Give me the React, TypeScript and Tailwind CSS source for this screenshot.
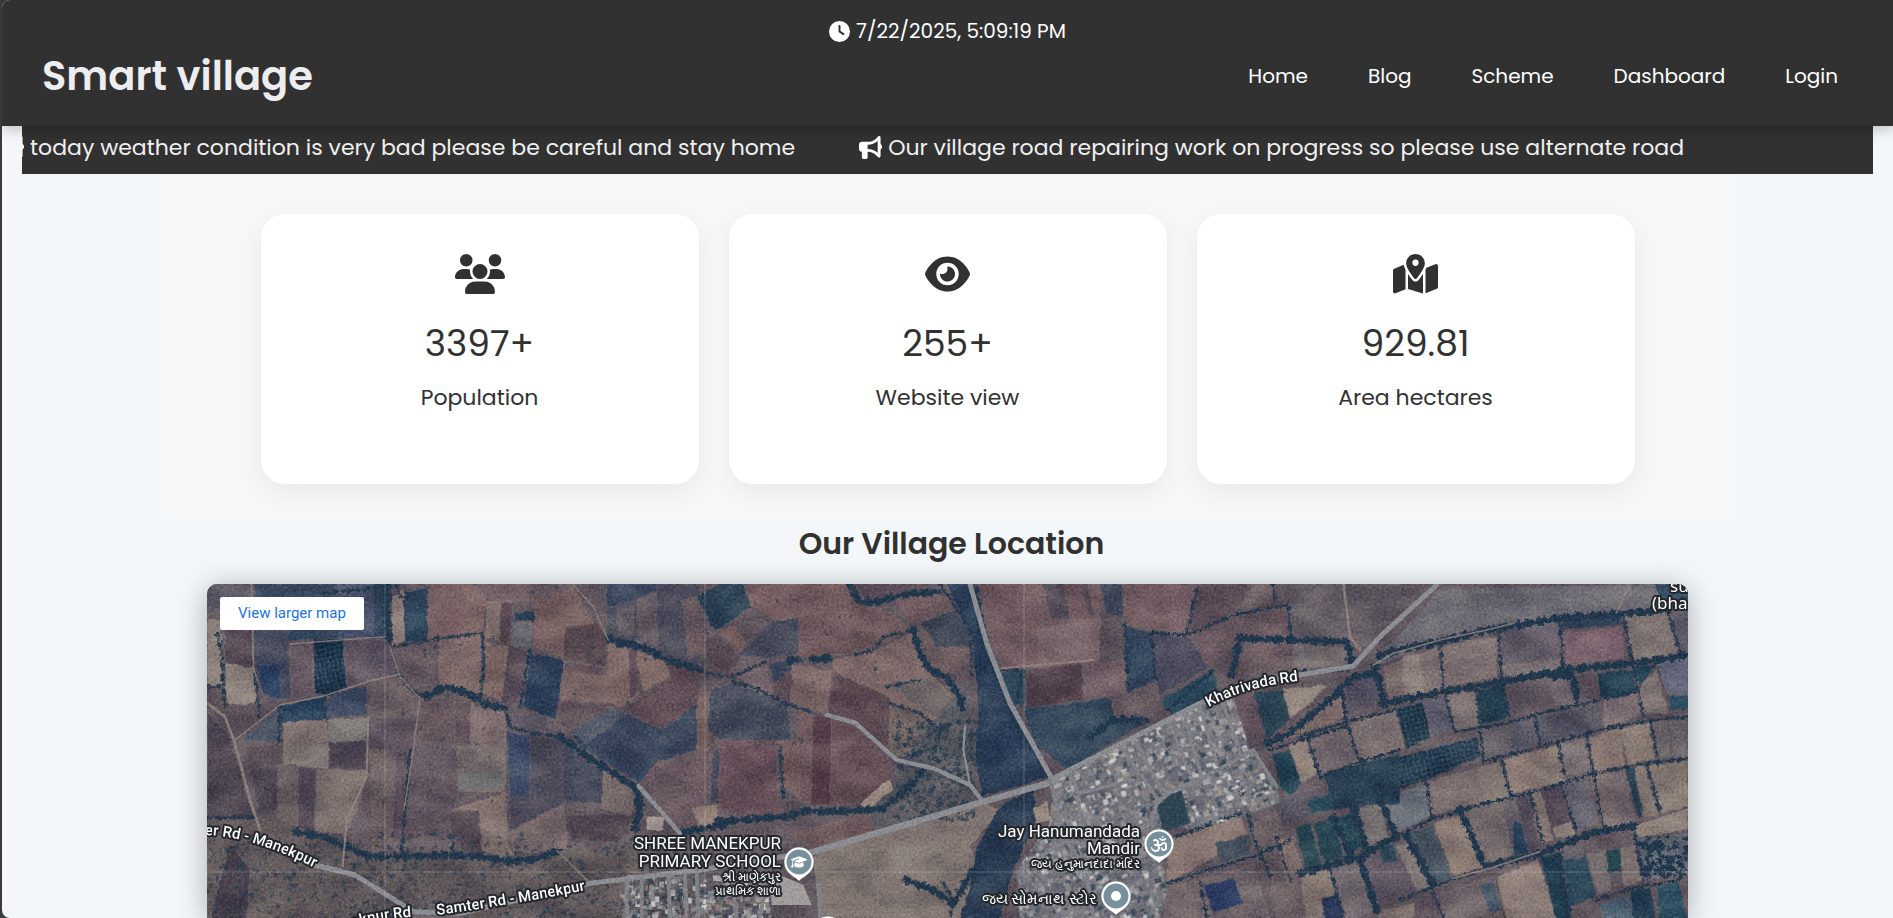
import type { ReactNode } from "react";
import {
  FaBullhorn,
  FaClock,
  FaEye,
  FaGraduationCap,
  FaMapLocationDot,
  FaOm,
  FaUsers,
} from "react-icons/fa6";

type Shape = [points: string, fill: string];

const NAV = ["Home", "Blog", "Scheme", "Dashboard", "Login"];

const NEWS = [
  "today weather condition is very bad please be careful and stay home",
  "Our village road repairing work on progress so please use alternate road",
];

const STATS: { icon: ReactNode; value: string; label: string }[] = [
  { icon: <FaUsers className="h-10 w-[50px]" />, value: "3397+", label: "Population" },
  { icon: <FaEye className="h-10 w-[45px]" />, value: "255+", label: "Website view" },
  { icon: <FaMapLocationDot className="h-10 w-[45px]" />, value: "929.81", label: "Area hectares" },
];

/* Aerial view: four tiles side by side, each in its own units (3 per pixel). */

const WEST: Shape[] = [
  ["22,42 150,42 150,140 22,130", "#56525f"],
  ["165,42 560,42 560,200 160,215", "#34465c"],
  ["415,42 520,42 520,200 415,205", "#46506a"],
  ["160,180 265,180 272,385 240,390 165,290", "#454a5c"],
  ["75,180 155,180 160,290 75,280", "#4f434f"],
  ["22,150 60,150 70,350 22,350", "#857a76"],
  ["75,280 160,295 170,400 80,405", "#8b7f7a"],
  ["170,285 240,285 240,390 190,370", "#2b4160"],
  ["270,222 335,215 345,375 275,388", "#62555f"],
  ["340,208 430,208 440,355 380,378 345,370", "#1f3850"],
  ["430,208 555,205 590,315 440,350", "#5f5460"],
  ["245,405 370,380 380,445 245,460", "#263f58"],
  ["385,375 500,345 500,435 385,445", "#3f4c62"],
  ["160,480 240,410 240,515 120,510", "#47505f"],
  ["250,460 380,450 385,515 250,520", "#80736f"],
  ["385,450 500,445 500,512 385,515", "#76726f"],
  ["250,520 385,518 385,598 250,580", "#7d7371"],
  ["388,517 498,514 498,598 388,596", "#524854"],
  ["135,530 245,522 245,585 145,600", "#5a4e55"],
  ["150,600 235,590 232,720 175,725", "#4f4751"],
  ["238,588 295,588 293,780 232,775", "#6a5f60"],
  ["296,590 347,597 342,785 293,780", "#544b55"],
  ["350,600 500,600 480,700 440,790 345,785", "#786c69"],
  ["520,330 600,315 655,385 650,440 505,440", "#6a5d61"],
  ["505,445 650,445 635,540 500,535", "#5e535d"],
  ["655,390 763,380 765,520 640,520", "#65565c"],
  ["765,385 812,390 812,520 765,520", "#5c4e55"],
  ["508,540 640,545 610,815 520,850", "#6c5e60"],
  ["590,545 635,545 610,815 575,815", "#584d58"],
  ["640,525 765,525 775,690 745,720 615,705", "#62575f"],
  ["615,705 745,705 755,812 610,815", "#5f545d"],
  ["770,525 918,520 918,665 775,665", "#786c6c"],
  ["778,600 915,600 915,660 778,660", "#70716f"],
  ["750,720 918,668 922,800 940,860 850,870 838,722", "#80706c"],
  ["745,725 835,722 848,870 760,850", "#544952"],
  ["580,240 680,222 710,345 620,350", "#66585f"],
  ["710,215 840,190 850,370 720,350", "#7a6765"],
  ["685,42 860,42 845,185 685,210", "#775f61"],
  ["820,42 1120,42 1000,95 860,95", "#6a5a60"],
  ["575,80 610,60 615,210 580,225", "#8b7c76"],
  ["612,65 680,55 683,210 615,215", "#2c4259"],
  ["860,95 940,90 930,220 855,205", "#806e6a"],
  ["905,95 940,97 928,218 897,218", "#5b4b53"],
  ["940,155 1000,160 990,235 932,225", "#6c6a72"],
  ["945,125 1005,125 1005,155 945,150", "#2a4156"],
  ["1005,90 1120,50 1200,200 1220,208 1090,260 1000,235", "#755f5f"],
  ["1095,170 1195,160 1225,210 1215,290 1090,260", "#57484f"],
  ["858,215 925,230 910,400 850,370", "#7c6864"],
  ["925,230 985,240 955,400 905,400", "#564b56"],
  ["990,250 1090,268 1068,450 970,410", "#2c3d56"],
  ["1090,270 1215,290 1220,400 1080,390", "#7a6664"],
  ["1095,272 1210,292 1210,318 1092,302", "#67555c"],
  ["1080,395 1230,405 1110,480 1070,460", "#5c4d56"],
  ["1225,215 1290,240 1320,375 1265,415 1215,390", "#7c6865"],
  ["1310,245 1390,265 1410,315 1330,365", "#7f6a65"],
  ["1285,240 1308,240 1320,360 1290,390", "#5a4a54"],
  ["1220,42 1500,42 1500,300 1400,270 1260,225 1220,190", "#4d4c5b"],
  ["1220,42 1370,42 1370,60 1250,110 1220,110", "#39455a"],
  ["1250,115 1300,110 1300,200 1255,195", "#5d5860"],
  ["1310,90 1370,65 1375,250 1310,225", "#665b62"],
  ["1405,275 1500,310 1500,395 1385,480 1275,415 1410,320", "#5d4b53"],
  ["1110,480 1245,415 1385,480 1490,400 1495,540 1370,575 1320,640 1140,530", "#3a465a"],
  ["1110,480 1245,415 1285,430 1160,520", "#525966"],
  ["930,430 1010,435 1080,490 960,480", "#5a5560"],
  ["920,485 1090,510 1210,590 1205,700 1090,700 990,785 930,780", "#4f4c59"],
  ["920,485 990,500 990,680 930,680", "#3b4963"],
  ["1090,530 1210,600 1205,700 1090,690", "#3f4353"],
  ["812,390 915,415 918,520 812,520", "#79696a"],
  ["925,785 1090,700 1105,835 940,850", "#78696a"],
  ["1105,735 1295,735 1290,790 1250,815 1110,815", "#51454f"],
  ["1210,600 1310,670 1295,735 1205,720", "#776a69"],
  ["1320,640 1370,575 1500,550 1500,790 1440,780", "#62535a"],
  ["22,430 90,500 170,770 22,740", "#4a424e"],
  ["22,750 230,745 430,830 600,860 860,860 1060,840 1280,820 1500,830 1500,1050 22,1050", "#605759"],
  ["90,820 150,900 140,1050 30,1050", "#453e4a"],
];

const CENTRE: Shape[] = [
  ["430,42 740,42 775,110 600,140 525,150 455,105", "#735b5d"],
  ["245,90 290,80 345,185 315,240 265,270", "#66575d"],
  ["290,80 360,42 430,42 455,110 345,185", "#2b4152"],
  ["315,210 350,190 425,260 380,320 320,260", "#56474f"],
  ["360,185 405,165 440,225 425,255", "#775f5c"],
  ["410,255 525,150 595,145 595,250 500,265", "#454858"],
  ["600,140 720,118 755,250 600,260", "#6c5559"],
  ["720,118 830,110 880,130 930,180 830,230 755,250", "#6f5a5c"],
  ["770,42 1030,42 1020,65 800,100", "#5b4c57"],
  ["885,90 1030,60 1060,120 940,160", "#6c585c"],
  ["950,170 1060,120 1110,180 1120,310 1020,310 980,260", "#67585b"],
  ["960,160 1060,120 1110,180 1110,230 1010,230", "#3f4553"],
  ["410,320 500,280 515,375 480,355", "#716067"],
  ["510,280 580,270 575,300 520,340", "#3a4557"],
  ["520,340 580,295 570,400 520,375", "#5a4a53"],
  ["580,285 695,300 680,435 570,400", "#7a6664"],
  ["700,270 830,240 930,190 980,300 1080,400 1080,470 1000,450 870,400 700,300", "#7b6766"],
  ["870,350 980,320 1070,400 1080,470 1000,440", "#6c6465"],
  ["700,305 870,380 865,525 840,545 765,455 685,430", "#5b4951"],
  ["330,360 400,340 560,400 575,510 360,510 325,480", "#434858"],
  ["295,370 325,365 325,540 290,545", "#725d5c"],
  ["362,510 530,510 535,735 440,735 355,720", "#654f57"],
  ["535,510 600,510 600,690 550,640", "#725b5c"],
  ["600,420 640,435 632,700 600,695", "#6c565b"],
  ["640,440 695,440 690,705 632,705", "#573f49"],
  ["695,450 770,465 870,580 880,640 780,700 692,705", "#654f55"],
  ["870,400 960,430 1020,480 990,550 870,560", "#6d615f"],
  ["1130,42 1500,42 1500,280 1210,300 1165,180", "#6f595f"],
  ["1310,180 1500,140 1500,270 1320,285", "#79666a"],
  ["1270,420 1500,390 1500,560 1310,540", "#34495a"],
  ["640,860 820,780 1150,700 1200,720 1110,830 1200,1050 660,1050", "#7f746f"],
  ["570,790 820,730 830,785 640,845", "#6b575a"],
  ["890,590 1120,650 1130,700 830,780 800,720 880,650", "#5c5a60"],
  ["1000,450 1100,330 1125,550 1130,670 900,580", "#57585f"],
  ["780,700 870,625 880,660 800,720", "#a08f85"],
  ["160,580 290,545 350,545 350,700 270,760 165,700", "#66565d"],
  ["340,545 360,530 355,700 330,700", "#46495a"],
  ["275,710 350,705 355,760 300,780", "#8a7870"],
  ["140,740 190,740 190,780 140,780", "#a59992"],
  ["1040,42 1105,42 1160,230 1230,400 1350,620 1145,680 1125,550 1135,400 1115,200", "#2a3d55"],
  ["1200,710 1300,650 1310,750 1240,900 1200,1050 1080,1050 1120,900 1130,830", "#28394f"],
  ["1300,720 1340,690 1350,750 1310,760", "#92867d"],
];

const VILLAGE: Shape[] = [
  ["300,42 365,42 370,140 320,130", "#3e4757"],
  ["125,42 190,42 210,145 155,148", "#514b57"],
  ["240,42 260,42 285,135 265,135", "#564952"],
  ["370,42 590,42 560,190 375,170", "#70595f"],
  ["590,50 760,42 700,130 565,190", "#594b55"],
  ["760,42 820,42 815,95 720,125", "#6a5d61"],
  ["375,165 455,190 465,330 385,370", "#33455b"],
  ["570,195 860,105 870,200 720,210 620,290", "#66565d"],
  ["455,195 570,200 625,295 470,380", "#4a4a5b"],
  ["245,280 375,270 385,375 255,390", "#715f66"],
  ["80,300 245,282 250,390 80,415", "#54454e"],
  ["330,395 470,335 475,390 340,455", "#6b5d61"],
  ["0,310 75,300 75,410 40,410", "#31495a"],
  ["75,415 330,385 345,450 450,450 200,600 130,540", "#34485a"],
  ["480,390 640,300 660,370 520,440", "#2a4558"],
  ["870,42 1200,42 1200,110 1090,240 1050,210 870,200", "#625b62"],
  ["720,210 880,215 880,290 700,320", "#66585e"],
  ["880,220 1050,235 1050,280 885,300", "#726a6b"],
  ["700,370 765,365 800,500 740,530", "#61515a"],
  ["760,365 850,360 870,450 800,510", "#2b4553"],
  ["850,355 980,345 930,400 870,445", "#958880"],
  ["810,530 1020,370 1035,440", "#7b6a68"],
  ["1040,330 1140,310 1150,390 1040,440", "#55505e"],
  ["1045,470 1185,420 1200,540 1080,580", "#786c6c"],
  ["920,510 1040,470 1075,575 960,610", "#71666a"],
  ["865,525 915,505 955,610 905,640", "#8d7e77"],
  ["815,550 870,540 905,640 870,680 840,650", "#234251"],
  ["970,610 1200,550 1200,700 1000,720", "#2a4052"],
  ["830,690 930,660 1000,720 820,770", "#56525f"],
  ["925,690 990,670 1000,720 930,730", "#2a4858"],
  ["500,810 720,740 750,800 500,940", "#84736e"],
  ["650,820 750,790 750,850 655,885", "#3f4b58"],
  ["500,950 600,930 600,1050 490,1050", "#6f6265"],
  ["600,930 760,880 810,1050 610,1050", "#6d6165"],
  ["610,945 700,925 730,1000 640,1030", "#2b3b60"],
  ["760,760 830,720 850,790 760,830", "#6e6265"],
  ["830,810 880,800 910,910 860,930", "#776765"],
  ["885,770 930,760 960,890 920,900", "#27454f"],
  ["945,755 1000,745 1030,850 960,860", "#25434f"],
  ["1005,750 1050,730 1085,830 1040,850", "#254350"],
  ["1060,720 1130,700 1160,800 1100,830", "#77706f"],
  ["810,950 890,920 920,1050 830,1050", "#6f6163"],
  ["900,930 990,910 1030,1050 920,1050", "#857870"],
  ["965,985 1015,975 1030,1050 975,1050", "#2c3858"],
];

const VILLAGE_AREA =
  "160,620 600,400 700,385 750,540 830,650 840,700 720,740 580,780 480,760 500,960 480,1050 60,1050 50,900 150,760";

const POND = "545,660 570,760 490,785 470,710 505,675";

const EAST: Shape[] = [
  ["200,300 420,60 1060,42 1100,120 420,210", "#6a6870"],
  ["425,225 590,200 590,320 430,355", "#7b6e6e"],
  ["250,290 420,230 430,355 265,390", "#7a6c6c"],
  ["305,260 360,250 375,375 315,375", "#8c7f79"],
  ["595,180 780,165 780,260 600,280", "#615a66"],
  ["600,285 780,265 780,310 600,330", "#736a6d"],
  ["785,190 968,170 970,265 790,280", "#775f6a"],
  ["785,145 965,135 968,165 785,180", "#35465a"],
  ["975,140 1100,125 1135,250 1000,285", "#7f7371"],
  ["1060,42 1164,42 1164,110 1100,120", "#2b4459"],
  ["1115,130 1164,120 1164,245 1140,250", "#5b5866"],
  ["890,310 1000,300 1005,370 905,390", "#24404f"],
  ["1010,360 1070,300 1105,430 1030,430", "#7f7472"],
  ["1000,290 1070,285 1020,350", "#233f53"],
  ["1070,275 1164,260 1164,380 1100,370", "#66687a"],
  ["1105,380 1164,375 1164,420 1110,420", "#2d4b5f"],
  ["620,345 750,335 760,410 630,440", "#605760"],
  ["755,335 820,320 825,400 765,405", "#696067"],
  ["830,315 885,310 890,390 835,395", "#61565f"],
  ["530,360 605,345 625,440 545,465", "#24404f"],
  ["440,375 525,360 540,465 465,480", "#7b7070"],
  ["370,395 435,385 460,480 395,495", "#5e5d6b"],
  ["285,415 370,395 390,500 320,540", "#294453"],
  ["80,620 530,500 540,560 380,630 230,680 100,720", "#294053"],
  ["145,465 285,420 315,530 180,570", "#7a6d6b"],
  ["205,480 245,470 265,545 225,550", "#5c5762"],
  ["200,445 240,435 245,460 205,467", "#a19186"],
  ["705,440 900,400 910,470 720,525", "#4f4e5b"],
  ["635,465 700,450 715,525 635,545", "#5b5a66"],
  ["540,480 630,465 630,545 550,570", "#666066"],
  ["905,390 1010,370 1025,435 915,470", "#78696d"],
  ["865,505 960,475 975,585 885,605", "#85766f"],
  ["960,480 1050,455 1065,565 985,580", "#84776f"],
  ["1055,450 1100,450 1115,560 1075,565", "#736a6c"],
  ["1110,450 1155,445 1155,560 1120,560", "#6b646a"],
  ["780,520 860,505 870,600 795,620", "#786e70"],
  ["610,570 775,525 795,635 635,670", "#867870"],
  ["530,590 605,575 625,680 550,700", "#817570"],
  ["382,635 530,595 548,700 395,735", "#7b6d6d"],
  ["245,680 378,645 390,740 285,790", "#6a7079"],
  ["170,720 240,695 262,800 200,830", "#746f70"],
  ["105,745 160,725 190,830 150,850", "#234250"],
  ["40,760 95,745 130,860 75,880", "#25434f"],
  ["0,775 30,770 65,880 10,890", "#2c4553"],
  ["400,760 480,735 550,890 460,915", "#8a7b73"],
  ["320,790 400,765 455,925 400,940", "#46535f"],
  ["490,720 600,690 640,850 550,885", "#73696a"],
  ["605,695 640,685 685,850 640,860", "#5d5660"],
  ["640,750 665,760 685,850 640,860", "#2b4458"],
  ["645,680 685,670 720,830 690,850", "#4e4855"],
  ["690,665 720,655 760,810 725,820", "#827470"],
  ["720,655 780,645 825,785 760,800", "#5a4e59"],
  ["760,770 815,755 825,795 765,800", "#8b7f79"],
  ["785,640 860,620 895,760 830,780", "#62606b"],
  ["870,620 930,605 960,770 910,775", "#766869"],
  ["935,605 975,600 1005,750 960,765", "#6f6469"],
  ["1000,590 1035,585 1080,735 1035,740", "#7d716c"],
  ["975,595 1000,590 1030,740 1015,745", "#26404f"],
  ["1040,590 1164,570 1164,710 1085,730", "#857970"],
  ["1000,770 1164,720 1164,780 1010,800", "#8b7f77"],
  ["1015,805 1164,790 1164,915 1030,930", "#646870"],
  ["180,880 300,820 390,940 230,1010", "#5e5561"],
  ["240,835 280,820 290,870 250,880", "#2a4556"],
  ["290,830 330,815 390,950 350,965", "#7d7371"],
  ["5,915 90,900 130,1050 20,1050", "#857870"],
  ["60,985 115,975 130,1050 75,1050", "#2c3858"],
  ["95,895 175,870 225,1020 140,1050", "#6c6468"],
  ["590,920 715,870 770,1050 620,1050", "#8a7c75"],
  ["720,860 775,850 805,1050 770,1050", "#223f50"],
  ["785,845 850,835 890,980 810,1010", "#2a4556"],
  ["790,835 850,825 850,860 790,870", "#665f66"],
  ["860,850 915,840 935,960 895,975", "#746b6c"],
  ["918,840 960,835 965,905 925,910", "#25434f"],
  ["960,835 1005,825 1030,930 970,950", "#807470"],
  ["420,970 580,915 610,1050 430,1050", "#6f6468"],
  ["540,945 580,930 605,1020 570,1030", "#485666"],
  ["230,1025 340,1000 350,1050 235,1050", "#7d716d"],
  ["345,1000 415,980 430,1050 340,1050", "#594f59"],
  ["900,1000 985,975 1000,1050 910,1050", "#4d6070"],
  ["990,960 1050,950 1070,1050 1000,1050", "#243d4f"],
  ["1070,950 1140,935 1160,1050 1080,1050", "#2a4c5c"],
];

const TREES_WEST = [
  "52,190 65,260 75,410",
  "165,310 178,440",
  "240,410 238,515",
  "22,350 60,350",
  "370,70 560,50 565,215",
  "590,45 600,80",
  "580,230 710,205 845,190",
  "848,195 850,300 840,390",
  "595,310 640,365 680,380",
  "915,415 930,470 1000,490 1080,500",
  "990,240 960,410",
  "372,380 380,450",
  "630,540 615,720 605,860",
  "755,800 760,860",
  "22,745 160,740",
];

const THICK_WEST = [
  "680,378 740,350 800,368 860,405 915,415",
  "1080,500 1140,545 1310,655",
  "1225,205 1280,225 1340,235 1400,270 1500,300",
  "1310,660 1320,720 1305,780",
  "560,42 565,215",
  "290,785 370,800 440,830 510,860 600,860 760,855 850,860 920,875 1000,868 1080,840",
];

const TREES_CENTRE = [
  "50,225 90,215 150,240 200,268 260,280 320,310 390,322 500,275",
  "770,253 820,240 850,200 940,180",
  "1020,42 1060,100 1110,180 1115,310",
  "860,350 960,330",
  "870,400 960,430 1020,480 1010,530 920,560",
  "540,530 545,600 550,680",
  "400,335 480,360 560,400 640,430",
  "1155,240 1225,410 1340,610",
  "1210,300 1270,300 1250,400",
  "1030,940 1060,990 1050,1040",
];

const THICK_CENTRE = [
  "355,755 450,748 560,740 620,722 700,725 850,715 930,650 970,600",
  "255,785 370,765",
  "940,180 960,250 990,300 1040,320 1080,380 1090,420",
  "750,42 775,95 830,95 930,70 1020,65",
  "110,655 120,720 105,760",
  "570,270 600,268",
  "640,268 690,264",
  "920,930 1000,960 1060,1000 1120,900",
  "1125,60 1150,220",
];

const TREES_VILLAGE = [
  "455,190 465,325",
  "375,165 385,370",
  "560,190 590,60",
  "455,188 560,195 700,135 865,105 872,205",
  "820,42 825,100",
  "500,420 640,300",
  "880,305 1050,300",
  "810,540 920,505 1040,470",
  "1025,370 1040,460",
  "1130,310 1150,400 1190,400",
  "500,940 620,900 760,860 870,810",
  "720,640 760,800 810,920",
  "500,810 720,730",
  "830,800 870,930",
  "600,940 620,1040",
];

const THICK_VILLAGE = [
  "720,200 695,320",
  "720,205 1040,215 1055,280",
  "800,520 870,490 1000,380 1060,320 1130,310",
  "270,500 340,450 440,450",
];

const TREES_EAST = [
  "0,500 140,455 285,420",
  "60,620 180,575 300,540",
  "465,485 620,460 720,430 900,390 1010,365",
  "550,575 720,530 915,475 1060,450 1164,440",
  "290,800 400,745 560,700 740,655 880,610 1040,580 1164,565",
  "300,990 450,930 580,890",
  "595,180 605,330 630,450",
  "780,150 790,305",
  "970,130 1000,290 1030,440",
  "420,220 430,360 465,485",
  "125,350 140,460 180,575",
  "25,510 60,620",
  "530,360 550,575",
  "705,440 720,530",
  "775,525 795,620",
  "860,500 880,610 910,775",
  "605,575 635,690",
  "380,640 395,740",
  "820,320 830,400",
  "780,640 830,785",
  "690,670 730,820",
  "1040,580 1080,730",
  "1050,450 1075,570",
  "1000,770 1030,940",
  "90,900 130,1044",
  "1105,125 1140,250",
  "400,970 430,1044",
  "890,990 990,955 1140,930",
];

const THICK_EAST = [
  "240,255 290,240 420,215 560,180 780,145 1100,120",
  "250,400 430,365 610,335 790,300 1000,280 1164,255",
  "0,910 180,860 290,800",
  "560,890 720,850 870,790 1010,765",
  "225,290 255,400",
  "480,720 555,890",
  "240,690 290,800",
  "165,720 200,840",
  "100,745 150,850",
  "775,860 805,1044",
  "180,870 230,1020",
  "320,800 400,945",
  "760,320 820,315 830,385",
];

function random(seed: number) {
  let s = seed;
  return () => {
    s = (s * 16807) % 2147483647;
    return s / 2147483647;
  };
}

const ROOFS = ["#b9b7b8", "#9a989b", "#8a888d", "#dcdad8", "#8c8078", "#465362", "#2f4252", "#a39d9a", "#6a6a72", "#7f7f86"];

function buildRoofs(seed: number, count: number, x: number, y: number, w: number, h: number) {
  const next = random(seed);
  return Array.from({ length: count }, (_, i) => ({
    id: i,
    x: x + next() * w,
    y: y + next() * h,
    w: 5 + next() * 14,
    h: 5 + next() * 14,
    fill: ROOFS[Math.floor(next() * ROOFS.length)],
    turn: -24 + next() * 8,
  }));
}

const MAIN_ROOFS = buildRoofs(77, 2400, 50, 385, 800, 665);
const SCHOOL_ROOFS = buildRoofs(31, 400, 60, 915, 440, 130);

function buildDots(seed: number, count: number, x: number, y: number, w: number, h: number) {
  const next = random(seed);
  return Array.from({ length: count }, (_, i) => ({
    id: i,
    x: x + next() * w,
    y: y + next() * h,
    r: 2 + next() * 5,
  }));
}

const SCRUB = buildDots(5, 900, 22, 790, 1500, 255);
const GROVE = buildDots(9, 110, 1020, 800, 140, 120);
const BANK = buildDots(12, 300, 880, 450, 250, 300);
const FIELD_TREES = buildDots(21, 260, 500, 50, 1600, 650);

function Fields({ shapes }: { shapes: Shape[] }) {
  return (
    <g stroke="#8f8280" strokeOpacity="0.3" strokeWidth="2">
      {shapes.map(([points, fill]) => (
        <polygon key={points} points={points} fill={fill} />
      ))}
    </g>
  );
}

function Trees({ lines, thick }: { lines: string[]; thick: string[] }) {
  return (
    <g fill="none" stroke="#20364b" strokeLinecap="round" strokeLinejoin="round">
      {lines.map((points) => (
        <polyline key={points} points={points} strokeWidth="5" />
      ))}
      {lines.map((points) => (
        <polyline key={points} points={points} strokeWidth="11" strokeDasharray="3 27 10 38 1 19" />
      ))}
      {thick.map((points) => (
        <polyline key={points} points={points} strokeWidth="14" />
      ))}
      {thick.map((points) => (
        <polyline key={points} points={points} strokeWidth="25" strokeDasharray="4 30 12 40 1 26" />
      ))}
    </g>
  );
}

function Pin({ x, y, children }: { x: number; y: number; children: ReactNode }) {
  return (
    <g transform={`translate(${x} ${y})`}>
      <path d="M0 19C-3 16-9 13.500-12 9A15 15 0 1 1 12 9C9 13.500 3 16 0 19Z" fill="#fff" stroke="#3b4048" strokeOpacity="0.4" />
      <circle r="12.500" fill="#78909c" />
      <g color="#fff">{children}</g>
    </g>
  );
}

function AerialMap() {
  return (
    <svg
      viewBox="0 0 1481 334"
      preserveAspectRatio="xMidYMin slice"
      className="block h-full w-full"
      role="img"
      aria-label="Satellite map of Manekpur"
    >
      <defs>
        <filter id="rough" x="0" y="0" width="100%" height="100%" colorInterpolationFilters="sRGB">
          <feTurbulence type="fractalNoise" baseFrequency="0.12" numOctaves="3" seed="4" result="n" />
          <feDisplacementMap in="SourceGraphic" in2="n" scale="4" xChannelSelector="R" yChannelSelector="G" />
        </filter>
        <filter id="leafy" x="0" y="0" width="100%" height="100%" colorInterpolationFilters="sRGB">
          <feTurbulence type="fractalNoise" baseFrequency="0.3" numOctaves="2" seed="8" result="n" />
          <feDisplacementMap in="SourceGraphic" in2="n" scale="7" xChannelSelector="R" yChannelSelector="G" />
        </filter>
        <filter id="grain" x="0" y="0" width="100%" height="100%" colorInterpolationFilters="sRGB">
          <feTurbulence type="fractalNoise" baseFrequency="0.4" numOctaves="3" seed="2" />
          <feColorMatrix values="1 1 0 0 -0.48  1 1 0 0 -0.48  1 1 0 0 -0.48  0 0 0 0 1" />
        </filter>
        <filter id="patches" x="0" y="0" width="100%" height="100%" colorInterpolationFilters="sRGB">
          <feTurbulence type="fractalNoise" baseFrequency="0.025 0.04" numOctaves="5" seed="15" />
          <feColorMatrix values="2 0.5 0 0 -0.75  1.800 0.5 0 0 -0.65  1.400 0.5 0 0 -0.42  0 0 0 0 1" />
        </filter>
        <pattern id="orchard" width="14" height="14" patternUnits="userSpaceOnUse" patternTransform="rotate(-14)">
          <circle cx="5" cy="5" r="5" fill="#162b3e" />
          <circle cx="11" cy="11" r="2" fill="#4c5b68" />
        </pattern>
        <clipPath id="village-area">
          <polygon points={VILLAGE_AREA} />
        </clipPath>
        <path id="khatrivada" d="M1002 123Q1036 103 1092 97" />
        <path id="samter-west" d="M-2 251Q45 252 108 284" />
        <path id="samter" d="M230 331Q310 320 384 305" />
        <path id="manekpur-rd" d="M146 343Q175 334 218 332" />
      </defs>

      <rect width="1481" height="334" fill="#5f555c" />

      <g filter="url(#rough)">
        <g transform="translate(-7 -14) scale(.33333)">
          <Fields shapes={WEST} />
          <polygon points="340,208 430,208 440,355 380,378 345,370" fill="url(#orchard)" />
          <g transform="translate(1200 0)">
            <Fields shapes={CENTRE} />
          </g>
          <g transform="translate(3300 0)">
            <Fields shapes={EAST} />
            <polygon points="80,620 530,500 540,560 380,630 230,680 100,720" fill="url(#orchard)" />
            <polygon points="285,415 370,395 390,500 320,540" fill="url(#orchard)" />
          </g>
          <g transform="translate(2400 0)">
            <Fields shapes={VILLAGE} />
            <polygon points={VILLAGE_AREA} fill="#72727a" />
          </g>
        </g>
      </g>

      <rect width="1481" height="334" filter="url(#patches)" className="opacity-25 mix-blend-soft-light" />

      <g filter="url(#leafy)">
        <g transform="translate(-7 -14) scale(.33333)">
          <g fill="#2b3c4d">
            {SCRUB.map((d) => (
              <circle key={d.id} cx={d.x} cy={d.y} r={d.r} opacity="0.65" />
            ))}
            {FIELD_TREES.map((d) => (
              <circle key={d.id} cx={d.x} cy={d.y} r={d.r - 1} opacity="0.6" />
            ))}
          </g>
          <Trees lines={TREES_WEST} thick={THICK_WEST} />
          <g transform="translate(1200 0)">
            <g fill="#25394a">
              {BANK.map((d) => (
                <circle key={d.id} cx={d.x} cy={d.y} r={d.r + 1} opacity="0.7" />
              ))}
            </g>
            <Trees lines={TREES_CENTRE} thick={THICK_CENTRE} />
          </g>
          <g transform="translate(2400 0)">
            <Trees lines={TREES_VILLAGE} thick={THICK_VILLAGE} />
          </g>
          <g transform="translate(3300 0)">
            <Trees lines={TREES_EAST} thick={THICK_EAST} />
            <g fill="#20364b">
              {GROVE.map((d) => (
                <circle key={d.id} cx={d.x} cy={d.y} r={d.r + 2} />
              ))}
            </g>
          </g>
        </g>
      </g>

      <g transform="translate(-7 -14) scale(.33333)">
        <g transform="translate(2400 0)">
          <g clipPath="url(#village-area)">
            {MAIN_ROOFS.map((r) => (
              <rect
                key={r.id}
                x={r.x}
                y={r.y}
                width={r.w}
                height={r.h}
                fill={r.fill}
                opacity="0.8"
                transform={`rotate(${r.turn} ${r.x} ${r.y})`}
              />
            ))}
          </g>
          <polygon points={POND} fill="#2d4352" />
        </g>
        <g transform="translate(1200 0)">
          {SCHOOL_ROOFS.map((r) => (
            <rect key={r.id} x={r.x} y={r.y} width={r.w} height={r.h} fill={r.fill} opacity="0.8" />
          ))}
          <polygon points="540,915 610,945 635,1005 515,1005 512,955" fill="#a09c9c" />
        </g>
      </g>

      <g
        transform="translate(-7 -14) scale(.33333)"
        fill="none"
        strokeLinejoin="round"
        strokeLinecap="round"
        stroke="#8b8c91"
      >
        <g stroke="#94857f" strokeOpacity="0.8" strokeWidth="4">
          <polyline points="22,400 75,440 105,520 150,690 180,780" strokeWidth="8" />
          <polyline points="105,510 240,405 370,378 520,330 600,312" />
          <polyline points="155,42 160,290 175,340" />
          <polyline points="270,222 555,200" />
          <polyline points="505,440 500,620 440,750 428,890" strokeWidth="6" />
          <polyline points="570,230 600,320 660,385 640,540 612,720" />
          <polyline points="1120,45 1180,110 1225,210" />
          <polyline points="1070,840 1170,940" />
          <polyline points="2405,295 2580,280 2680,270" strokeWidth="6" />
          <polyline points="3430,42 3450,200 3480,240" strokeWidth="8" />
          <polyline points="3520,285 3580,250 3720,210 3860,180 3940,160" strokeWidth="5" />
          <polyline points="3760,925 3870,895 4020,845" strokeWidth="6" />
          <polyline points="4310,770 4464,718" strokeWidth="6" />
          <polyline points="4250,128 4290,42" strokeWidth="6" />
        </g>
        <polyline points="345,885 465,915 640,1025 780,1030 1170,940 1500,900 1840,845" strokeWidth="15" />
        <g transform="translate(1200 0)">
          <polyline points="115,648 180,720 240,790" strokeWidth="13" />
          <polyline points="680,435 765,458 890,570 1000,595 1110,645 1145,690" strokeWidth="13" />
          <polyline points="1110,645 1090,540 1095,470" strokeWidth="7" />
          <polyline points="1110,42 1160,220 1230,400 1355,625" strokeWidth="15" />
          <polyline points="640,845 1150,695 1370,632" strokeWidth="19" />
          <g strokeWidth="12" stroke="#808187">
            <polyline points="80,930 80,1044" />
            <polyline points="125,925 125,1044" />
            <polyline points="205,915 210,1044" />
            <polyline points="255,910 260,1044" />
            <polyline points="290,905 295,1044" />
            <polyline points="400,960 410,1044" />
            <polyline points="500,930 480,1044" />
            <polyline points="655,940 660,1044" />
          </g>
        </g>
        <g transform="translate(2400 0)">
          <polyline points="150,630 600,400 720,350 880,318 1060,288 1140,200 1310,45" strokeWidth="15" />
          <g stroke="#808187" strokeWidth="11">
            <polyline points="150,630 185,760" />
            <polyline points="210,610 235,670 240,790" />
            <polyline points="235,670 400,630" />
            <polyline points="370,540 475,690 450,760 400,790" />
            <polyline points="410,520 490,670 570,640" />
            <polyline points="510,460 580,640 760,540" />
            <polyline points="555,450 605,620" />
            <polyline points="600,410 650,580" />
            <polyline points="670,400 720,550" />
            <polyline points="470,700 520,660 580,640" />
            <polyline points="760,540 830,650" />
            <polyline points="190,800 260,900 280,1044" />
            <polyline points="120,860 200,810 420,860" />
          </g>
        </g>
      </g>

      <rect width="1481" height="334" filter="url(#grain)" className="opacity-30 mix-blend-soft-light" />

      <path d="M178 0V334M498 0V334M817 0V334M0 288H1481" stroke="#fff" strokeOpacity="0.2" />

      <g
        fill="#fff"
        stroke="#23262b"
        strokeWidth="4"
        strokeLinejoin="round"
        paintOrder="stroke"
        className="font-['Roboto','Noto_Sans',sans-serif]"
      >
        <g className="text-[15px] font-medium">
          <text><textPath href="#khatrivada">Khatrivada Rd</textPath></text>
          <text><textPath href="#samter-west">er Rd - Manekpur</textPath></text>
          <text><textPath href="#samter">Samter Rd - Manekpur</textPath></text>
          <text><textPath href="#manekpur-rd">ekpur Rd</textPath></text>
        </g>
        <g textAnchor="end" className="text-[17px]">
          <text x="574" y="265">SHREE MANEKPUR</text>
          <text x="574" y="283">PRIMARY SCHOOL</text>
          <text x="933" y="253">Jay Hanumandada</text>
          <text x="933" y="270">Mandir</text>
        </g>
        <text x="890" y="320" textAnchor="end" className="text-[15px]">જય સોમનાથ સ્ટોર</text>
        <g textAnchor="end" className="text-[12px]">
          <text x="574" y="297">શ્રી માણેકપુર</text>
          <text x="574" y="311">પ્રાથમિક શાળા</text>
          <text x="933" y="284">જય હનુમાનદાદા મંદિર</text>
        </g>
        <g className="font-['Noto_Sans',sans-serif] text-[17px]">
          <text x="1463" y="8">su</text>
          <text x="1445" y="25">(bha</text>
        </g>
      </g>

      <Pin x={592} y={278}>
        <FaGraduationCap x="-8" y="-8" width="16" height="16" />
      </Pin>
      <Pin x={952} y={260}>
        <FaOm x="-8" y="-8" width="16" height="16" />
      </Pin>
      <Pin x={909} y={312}>
        <circle r="5" fill="#fff" />
      </Pin>
      <Pin x={621} y={347}>
        <circle r="5" fill="#fff" />
      </Pin>
    </svg>
  );
}

export default function App() {
  return (
    <div className="h-screen bg-[#3a3a3c] pl-0.5 font-['Poppins','Inter',sans-serif]">
      <div className="flex h-full flex-col overflow-hidden rounded-l-lg bg-[#f3f7fa]">
        <header className="relative z-10 shrink-0 bg-[#313131] pt-4 pb-5 text-white shadow-[0_4px_12px_rgba(0,0,0,0.2)]">
          <div className="flex h-[30px] items-center justify-center gap-1.5 text-[20px]">
            <FaClock className="size-[21px]" />
            <time>7/22/2025, 5:09:19 PM</time>
          </div>
          <div className="flex h-[60px] items-center justify-between pr-[55px] pl-10">
            <h1 className="text-[40px] font-semibold text-[#ededf0]">Smart village</h1>
            <nav aria-label="Main">
              <ul className="flex gap-[60px] text-[20px]">
                {NAV.map((item) => (
                  <li key={item}>
                    <a href="#">{item}</a>
                  </li>
                ))}
              </ul>
            </nav>
          </div>
        </header>

        <div className="mx-5 flex h-12 shrink-0 items-center justify-end gap-16 overflow-hidden bg-[#313131] pr-[189px] pb-1.5 text-[22px] text-[#f0f0f0]">
          {NEWS.map((text) => (
            <p key={text} className="flex shrink-0 items-center gap-1.5 whitespace-nowrap">
              <FaBullhorn className="size-[23px] text-white" />
              {text}
            </p>
          ))}
        </div>

        <main className="flex min-h-0 grow flex-col">
          <section className="mx-auto grid w-full max-w-[1562px] shrink-0 grid-cols-3 gap-[30px] bg-[#f7f7f7] px-[94px] py-10">
            {STATS.map((stat) => (
              <article
                key={stat.label}
                className="flex flex-col items-center rounded-3xl bg-white pt-10 pb-[70px] text-[#313131] shadow-[0_8px_24px_rgba(0,0,0,0.06)]"
              >
                {stat.icon}
                <p className="mt-5 text-[36px] leading-[60px]">{stat.value}</p>
                <p className="mt-2 text-[22px] leading-8">{stat.label}</p>
              </article>
            ))}
          </section>

          <section className="mx-auto flex min-h-0 w-full max-w-[1481px] grow flex-col">
            <h2 className="mb-5 pl-2 text-center text-[30px] leading-10 font-semibold text-[#313131]">
              Our Village Location
            </h2>
            <div className="relative min-h-0 grow rounded-t-[10px] shadow-[0_4px_30px_rgba(0,0,0,0.3)]">
              <div className="h-full overflow-hidden rounded-t-[10px]">
                <AerialMap />
              </div>
              <a
                href="#"
                className="absolute top-[13px] left-[13px] rounded-xs bg-white px-[18px] py-1.5 font-['Roboto',sans-serif] text-[15px] leading-[21px] text-[#1a73e8]"
              >
                View larger map
              </a>
            </div>
          </section>
        </main>
      </div>
    </div>
  );
}
